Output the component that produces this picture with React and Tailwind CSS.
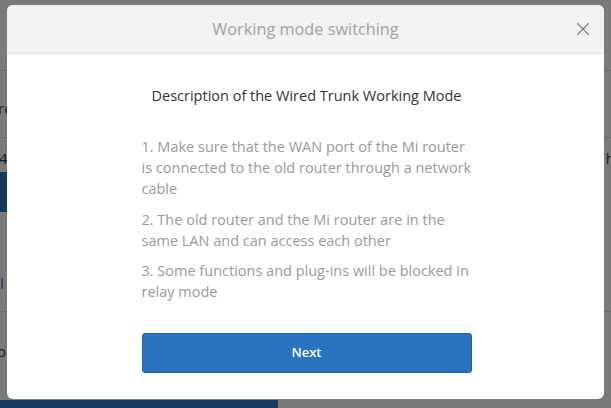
import { X } from 'lucide-react'

const steps = [
  '1. Make sure that the WAN port of the Mi router is connected to the old router through a network cable',
  '2. The old router and the Mi router are in the same LAN and can access each other',
  '3. Some functions and plug-ins will be blocked in relay mode',
]

// page behind the dimmed overlay
function BackgroundPage() {
  return (
    <div className="flex h-[408px] w-[611px] flex-col bg-white text-[15px] leading-[20px] text-[#333]">
      <div className="h-[71px] flex-shrink-0 border-b border-[#dcdcdc]" />
      <div className="h-[67px] flex-shrink-0 border-b border-[#dcdcdc] pt-[27px]">
        <span className="-ml-[2px]">re</span>
      </div>
      <div className="flex h-[34px] flex-shrink-0 justify-between pt-[10px]">
        <span className="-ml-[1px]">4</span>
        <span className="-mr-[4px]">h</span>
      </div>
      <div className="h-[40px] w-[200px] flex-shrink-0 bg-[#2e77c0]" />
      <div className="h-[100px] flex-shrink-0 border-b border-[#dcdcdc] pt-[61px]">
        <span className="text-[#2e77c0]">l</span>
      </div>
      <div className="h-[88px] flex-shrink-0 pt-[29px]">
        <span className="-ml-[3px]">o</span>
      </div>
      <div className="h-[8px] w-[278px] flex-shrink-0 bg-[#2e77c0]" />
    </div>
  )
}

export default function App() {
  return (
    <div className="relative h-[408px] w-[611px] overflow-hidden font-['Open_Sans',sans-serif]">
      <BackgroundPage />
      <div className="absolute inset-0 bg-black/[0.52]" />
      <div className="absolute left-[7px] top-[5px] flex h-[394px] w-[597px] flex-col overflow-hidden rounded-md bg-white">
        <div className="relative flex h-[49px] flex-shrink-0 items-center justify-center border-b border-[#e3e3e3] bg-[#f2f2f2]">
          <span className="text-[16.3px] text-[#a0a0a0]">Working mode switching</span>
          <button type="button" className="absolute right-[10px] top-[13px] text-[#808080]">
            <X size={22} strokeWidth={1.3} />
          </button>
        </div>
        <div className="mx-auto flex w-[332px] flex-col pl-[2px] pt-[31px]">
          <p className="text-center text-[14.5px] leading-[21px] text-[#333]">
            Description of the Wired Trunk Working Mode
          </p>
          <div className="mt-[30px] flex flex-col gap-[9.5px]">
            {steps.map((s) => (
              <p key={s} className="text-[14.5px] leading-[21px] text-[#9a9a9a]">{s}</p>
            ))}
          </div>
          <button
            type="button"
            className="mt-[31px] h-[40px] w-[330px] rounded-[3px] border border-[#1d62aa] bg-[#2a73bf] text-[13px] font-semibold text-white"
          >
            Next
          </button>
        </div>
      </div>
    </div>
  )
}
